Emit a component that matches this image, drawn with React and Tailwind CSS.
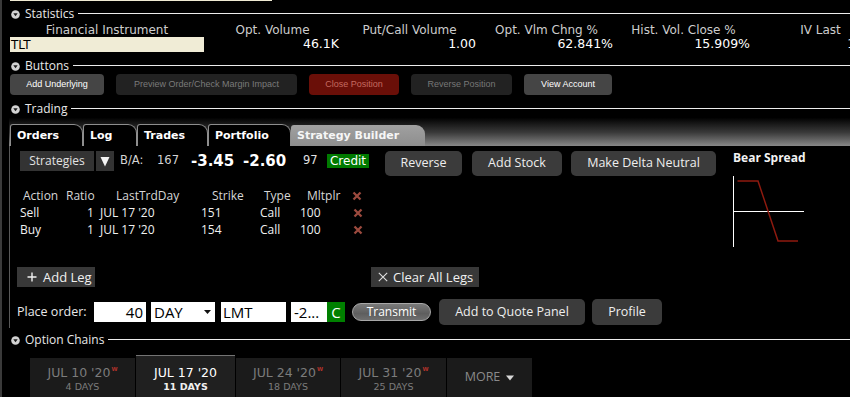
import React from "react";

function Disc() {
  return (
    <svg width="9" height="9" viewBox="0 0 9 9" className="shrink-0">
      <circle cx="4.5" cy="4.5" r="4.3" fill="#d2d2d2" />
      <path d="M2.3 3.3 H6.7 L4.5 6.3 Z" fill="#1a1a1a" />
    </svg>
  );
}

function SectionHeader({ label, tall }) {
  return (
    <div className={`shrink-0 flex items-center ml-[9px] ${tall ? "h-[16px]" : "h-[14px]"}`}>
      <Disc />
      <span className="ml-[5px] font-['Open_Sans',sans-serif] text-[12px] leading-none text-[#e8e8e8] whitespace-nowrap">
        {label}
      </span>
      <div className="flex-1 h-px bg-[#ececec] ml-[4px] mb-[1px]" />
    </div>
  );
}

function StatsGrid() {
  const cols = [
    ["Financial Instrument", "TLT"],
    ["Opt. Volume", "46.1K"],
    ["Put/Call Volume", "1.00"],
    ["Opt. Vlm Chng %", "62.841%"],
    ["Hist. Vol. Close %", "15.909%"],
    ["IV Last", "16.4%"],
  ];
  return (
    <div className="shrink-0 ml-[8px] grid grid-cols-[194px_137px_137px_137px_137px_137px] font-['DejaVu_Sans',sans-serif] leading-none">
      {cols.map(([h]) => (
        <div key={h} className="h-[15px] flex items-center justify-center text-[12px] text-[#cdcdcd] whitespace-nowrap">
          {h}
        </div>
      ))}
      {cols.map(([h, v], i) =>
        i === 0 ? (
          <div key={h + "v"} className="h-[15px] flex items-center bg-[#f0ecd6] text-black text-[12px] pl-[1px]">
            {v}
          </div>
        ) : (
          <div key={h + "v"} className="h-[15px] flex items-center justify-end pr-[2px] text-[12.5px] text-white whitespace-nowrap">
            {v}
          </div>
        )
      )}
    </div>
  );
}

function ButtonsRow() {
  const base =
    "h-[21px] rounded-[4px] flex items-center justify-center font-['Liberation_Sans',Arial,sans-serif] text-[9px] leading-none whitespace-nowrap";
  return (
    <div className="shrink-0 ml-[8px] flex gap-[12px] h-[21px]">
      <div className={`${base} w-[94px] bg-[#454545] text-white`}>Add Underlying</div>
      <div className={`${base} w-[181px] bg-[#222222] text-[#7a7a7a]`}>Preview Order/Check Margin Impact</div>
      <div className={`${base} w-[90px] bg-[#6a0f08] text-[#c46a60]`}>Close Position</div>
      <div className={`${base} w-[101px] bg-[#222222] text-[#777777]`}>Reverse Position</div>
      <div className={`${base} w-[88px] bg-[#454545] text-white`}>View Account</div>
    </div>
  );
}

function TabStrip() {
  const tab =
    "h-[22px] shrink-0 bg-black border-l border-t border-r border-[#8e8e8e] rounded-tl-[3px] rounded-tr-[9px] pl-[6px] flex items-center font-['DejaVu_Sans',sans-serif] font-bold text-[11px] leading-none text-white whitespace-nowrap";
  return (
    <div className="shrink-0 ml-[7px] h-[30px] pl-[1px] flex items-end bg-[linear-gradient(to_bottom,#000000_5%,#3a3a3a_55%,#888888)]">
      <div className={`${tab} w-[73px]`}>Orders</div>
      <div className={`${tab} w-[54px]`}>Log</div>
      <div className={`${tab} w-[71px]`}>Trades</div>
      <div className={`${tab} w-[83px]`}>Portfolio</div>
      <div className="h-[21px] w-[134px] shrink-0 bg-[linear-gradient(to_bottom,#a0a0a0,#8e8e8e)] rounded-tl-[3px] rounded-tr-[9px] pl-[6px] flex items-center font-['DejaVu_Sans',sans-serif] font-bold text-[11px] leading-none text-[#f6f6f6] whitespace-nowrap">
        Strategy Builder
      </div>
    </div>
  );
}

function RedX() {
  return (
    <svg width="10" height="10" viewBox="0 0 10 10">
      <path d="M1.5 1.5 L8.5 8.5 M8.5 1.5 L1.5 8.5" stroke="#9c4a3e" strokeWidth="2.3" />
    </svg>
  );
}

function LegsTable() {
  const cell = "whitespace-nowrap shrink-0";
  const rows = [
    ["Sell", "1", "JUL 17 '20", "151", "Call", "100"],
    ["Buy", "1", "JUL 17 '20", "154", "Call", "100"],
  ];
  return (
    <div className="mt-[12px] font-['Open_Sans',sans-serif] text-[12px] leading-none">
      <div className="h-[16px] flex items-center text-[#d6d6d6]">
        <span className={`${cell} ml-[13px] w-[43px]`}>Action</span>
        <span className={`${cell} w-[50px]`}>Ratio</span>
        <span className={`${cell} w-[96px]`}>LastTrdDay</span>
        <span className={`${cell} w-[52px]`}>Strike</span>
        <span className={`${cell} w-[43px]`}>Type</span>
        <span className={`${cell} w-[45px]`}>Mltplr</span>
        <RedX />
      </div>
      {rows.map((r) => (
        <div key={r[0]} className="h-[17px] flex items-center text-[#f0f0f0]">
          <span className={`${cell} ml-[10px] w-[67px]`}>{r[0]}</span>
          <span className={`${cell} w-[13px]`}>{r[1]}</span>
          <span className={`${cell} w-[101px]`}>{r[2]}</span>
          <span className={`${cell} w-[59px]`}>{r[3]}</span>
          <span className={`${cell} w-[40px]`}>{r[4]}</span>
          <span className={`${cell} w-[53px]`}>{r[5]}</span>
          <RedX />
        </div>
      ))}
    </div>
  );
}

function Panel() {
  const bigBtn =
    "h-[25px] rounded-[5px] bg-[#3b3b3b] flex items-center justify-center font-['Open_Sans',sans-serif] text-[12.5px] leading-none text-[#eeeeee] whitespace-nowrap shrink-0";
  return (
    <div className="shrink-0 ml-[7px] border-l border-[#585858] flex">
      <div className="w-[723px] shrink-0 pt-[5px] pb-[3px]">
        {/* strategy row */}
        <div className="flex items-start h-[25px]">
          <div className="ml-[10px] w-[74px] h-[20px] bg-[#333333] flex items-center justify-center font-['Open_Sans',sans-serif] text-[12px] leading-none text-[#e2e2e2] shrink-0">
            Strategies
          </div>
          <div className="ml-[2px] w-[18px] h-[20px] bg-[#333333] flex items-center justify-center shrink-0">
            <svg width="10" height="11" viewBox="0 0 10 11">
              <path d="M0.5 1 H9.5 L5 10.5 Z" fill="#f4f4f4" />
            </svg>
          </div>
          <div className="ml-[6px] h-[20px] flex items-center font-['DejaVu_Sans',sans-serif] leading-none whitespace-nowrap">
            <span className="w-[37px] text-[11.5px] text-[#d4d4d4]">B/A:</span>
            <span className="w-[34px] text-[11.5px] text-[#d4d4d4]">167</span>
            <span className="w-[52px] text-[15px] font-bold text-white">-3.45</span>
            <span className="w-[60px] text-[15px] font-bold text-white">-2.60</span>
            <span className="w-[24px] text-[11.5px] text-[#e0e0e0]">97</span>
            <span className="w-[42px] h-[14px] bg-[#007a00] flex items-center justify-center text-[12px] text-white">
              Credit
            </span>
          </div>
          <div className={`${bigBtn} ml-[16px] w-[77px]`}>Reverse</div>
          <div className={`${bigBtn} ml-[10px] w-[90px]`}>Add Stock</div>
          <div className={`${bigBtn} ml-[9px] w-[145px]`}>Make Delta Neutral</div>
        </div>

        <LegsTable />

        {/* add leg row */}
        <div className="mt-[29px] flex h-[20px]">
          <div className="ml-[7px] w-[78px] h-[20px] bg-[#383838] flex items-center shrink-0">
            <svg width="10" height="10" viewBox="0 0 10 10" className="ml-[10px]">
              <path d="M5 0.5 V9.5 M0.5 5 H9.5" stroke="#f0f0f0" strokeWidth="1.4" />
            </svg>
            <span className="ml-[6px] font-['Open_Sans',sans-serif] text-[13px] leading-none text-[#f0f0f0] whitespace-nowrap">
              Add Leg
            </span>
          </div>
          <div className="ml-[276px] w-[108px] h-[20px] bg-[#383838] flex items-center shrink-0">
            <svg width="10" height="10" viewBox="0 0 10 10" className="ml-[7px]">
              <path d="M0.8 0.8 L9.2 9.2 M9.2 0.8 L0.8 9.2" stroke="#e0e0e0" strokeWidth="1.1" />
            </svg>
            <span className="ml-[5px] font-['Open_Sans',sans-serif] text-[13px] leading-none text-[#f0f0f0] whitespace-nowrap">
              Clear All Legs
            </span>
          </div>
        </div>

        {/* place order row */}
        <div className="mt-[12px] flex items-center h-[26px]">
          <span className="ml-[7px] w-[77px] shrink-0 font-['Open_Sans',sans-serif] text-[12.5px] leading-none text-[#e8e8e8] whitespace-nowrap">
            Place order:
          </span>
          <div className="w-[52px] h-[20px] bg-white flex items-center justify-end pr-[3px] font-['Open_Sans',sans-serif] text-[15px] leading-none text-black shrink-0">
            40
          </div>
          <div className="ml-[5px] w-[64px] h-[20px] bg-white flex items-center pl-[3px] font-['Open_Sans',sans-serif] text-[15px] leading-none text-black shrink-0">
            <span className="flex-1">DAY</span>
            <svg width="7" height="4" viewBox="0 0 7 4" className="mr-[4px]">
              <path d="M0 0 H7 L3.5 4 Z" fill="#111" />
            </svg>
          </div>
          <div className="ml-[6px] w-[65px] h-[20px] bg-white flex items-center pl-[2px] font-['Open_Sans',sans-serif] text-[15px] leading-none text-black shrink-0">
            LMT
          </div>
          <div className="ml-[5px] w-[36px] h-[20px] bg-white flex items-center pl-[3px] font-['Open_Sans',sans-serif] text-[15px] leading-none text-black shrink-0 whitespace-nowrap overflow-hidden">
            -2...
          </div>
          <div className="w-[18px] h-[20px] bg-[#008000] flex items-center justify-center font-['Open_Sans',sans-serif] text-[15px] leading-none text-white shrink-0">
            C
          </div>
          <div className="ml-[7px] w-[79px] h-[18px] rounded-full border border-[#a8a8a8] bg-[linear-gradient(to_bottom,#7a7a7a,#5e5e5e_60%,#6e6e6e)] flex items-center justify-center font-['Open_Sans',sans-serif] text-[12px] leading-none text-white shrink-0">
            Transmit
          </div>
          <div className={`${bigBtn} h-[26px] ml-[8px] w-[146px]`}>Add to Quote Panel</div>
          <div className={`${bigBtn} h-[26px] ml-[7px] w-[70px]`}>Profile</div>
        </div>
      </div>

      <div className="flex-1 pt-[5px]">
        <div className="h-[14px] flex items-center font-['Open_Sans',sans-serif] font-bold text-[12px] leading-none text-[#f2f2f2] whitespace-nowrap">
          Bear Spread
        </div>
        <svg width="76" height="74" viewBox="0 0 76 74" className="mt-[11px] block">
          <line x1="0.5" y1="0" x2="0.5" y2="71" stroke="#ffffff" strokeWidth="1" />
          <line x1="0" y1="35.5" x2="71" y2="35.5" stroke="#ffffff" strokeWidth="1" />
          <polyline points="4.5,5 25,5 45,65 65,65" fill="none" stroke="#8f1a0f" strokeWidth="1.5" />
        </svg>
      </div>
    </div>
  );
}

function DateTabs() {
  const tabs = [
    { d: "JUL 10 '20", n: "4 DAYS", w: "w-[105px]" },
    { d: "JUL 17 '20", n: "11 DAYS", w: "w-[99px]", active: true },
    { d: "JUL 24 '20", n: "18 DAYS", w: "w-[104px]" },
    { d: "JUL 31 '20", n: "25 DAYS", w: "w-[105px]" },
  ];
  return (
    <div className="shrink-0 mt-[7px] ml-[28px] h-[42px] flex items-end gap-[1px]">
      {tabs.map((t) =>
        t.active ? (
          <div
            key={t.d}
            className={`${t.w} h-[42px] shrink-0 bg-[#202020] border-t border-[#747474] pt-[10px] flex flex-col items-center font-['DejaVu_Sans',sans-serif]`}
          >
            <div className="h-[14px] flex items-center text-[12.5px] leading-[14px] text-white whitespace-nowrap">{t.d}</div>
            <div className="h-[12px] flex items-center text-[9.5px] leading-[11px] font-bold text-[#f0f0f0] whitespace-nowrap">{t.n}</div>
          </div>
        ) : (
          <div
            key={t.d}
            className={`${t.w} h-[39px] shrink-0 bg-[#1b1b1b] pt-[8px] flex flex-col items-center font-['DejaVu_Sans',sans-serif]`}
          >
            <div className="h-[14px] flex items-start text-[12.5px] leading-[14px] text-[#7c7c7c] whitespace-nowrap">
              {t.d}
              <span className="ml-[1px] text-[5.5px] leading-[6px] font-bold text-[#b3332b]">W</span>
            </div>
            <div className="h-[12px] flex items-center text-[9.5px] leading-[11px] text-[#7c7c7c] whitespace-nowrap">{t.n}</div>
          </div>
        )
      )}
      <div className="w-[85px] h-[39px] shrink-0 bg-[#1b1b1b] flex items-center justify-center font-['Open_Sans',sans-serif] text-[12.5px] leading-none text-[#8a8a8a]">
        MORE
        <svg width="8" height="6" viewBox="0 0 8 6" className="ml-[6px]">
          <path d="M0 0.5 H8 L4 5.5 Z" fill="#d8d8d8" />
        </svg>
      </div>
    </div>
  );
}

export default function App() {
  return (
    <div className="w-[850px] h-[397px] bg-black overflow-hidden border-l-2 border-[#3a3a3a] flex flex-col text-white">
      <div className="shrink-0 ml-[8px] w-[262px] h-px bg-[#efead3]" />
      <div className="shrink-0 mt-[5px]">
        <SectionHeader label="Statistics" tall />
      </div>
      <StatsGrid />
      <div className="shrink-0 mt-[6px]">
        <SectionHeader label="Buttons" tall />
      </div>
      <ButtonsRow />
      <div className="shrink-0 mt-[7px]">
        <SectionHeader label="Trading" />
      </div>
      <TabStrip />
      <Panel />
      <div className="shrink-0 mt-[4px]">
        <SectionHeader label="Option Chains" tall />
      </div>
      <DateTabs />
    </div>
  );
}
